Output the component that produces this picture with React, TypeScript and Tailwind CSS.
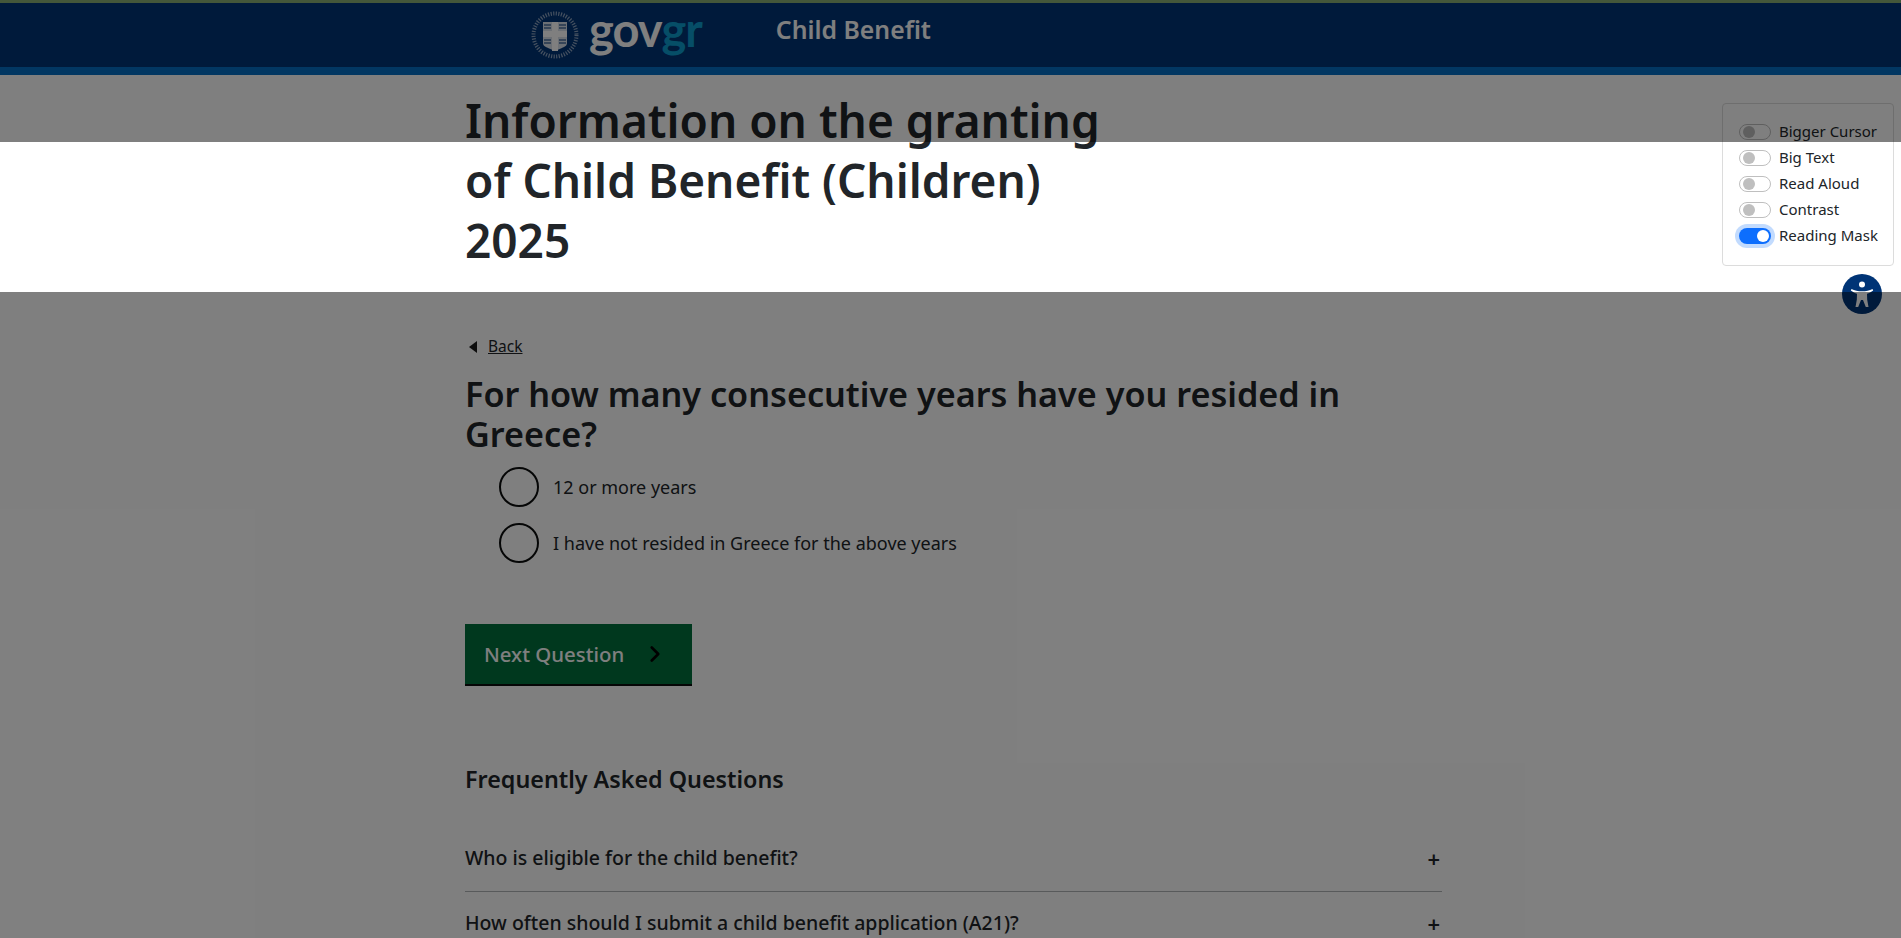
import { ChevronRight } from 'lucide-react';

const font = { fontFamily: '"Noto Sans", sans-serif' };

function Emblem() {
  return (
    <svg width="48" height="48" viewBox="0 0 48 48" className="shrink-0">
      <circle cx="24" cy="24" r="21.5" fill="none" stroke="#fff" strokeWidth="4" strokeDasharray="1.2 1.4" opacity="0.55" />
      <path d="M12 11h24v21c0 3-3 4-5 5l-7 3-7-3c-2-1-5-2-5-5z" fill="#fff" opacity="0.85" />
      <path d="M21 11h6v29h-6zM12 20h24v6H12z" fill="#fff" />
      <path d="M13 14h7M13 17h7M28 14h7M28 17h7M13 29h7M13 32h7M28 29h7M28 32h7" stroke="#003476" strokeWidth="1.1" />
    </svg>
  );
}

function Toggle({ label, on }: { label: string; on?: boolean }) {
  return (
    <div className="flex h-[26px] items-center gap-2">
      {on ? (
        <span className="flex h-4 w-8 items-center justify-end rounded-full bg-[#0d6efd] pr-[2px] shadow-[0_0_0_4px_rgba(13,110,253,0.25)]">
          <span className="h-3 w-3 rounded-full bg-white" />
        </span>
      ) : (
        <span className="flex h-4 w-8 items-center rounded-full border border-[#bfbfbf] bg-white pl-[3px]">
          <span className="h-3 w-3 rounded-full bg-[#bfbfbf]" />
        </span>
      )}
      <span className="text-[15px] text-[#212529]">{label}</span>
    </div>
  );
}

function Radio({ label }: { label: string }) {
  return (
    <div className="flex h-14 items-center gap-[14px] pl-[34px]">
      <span className="h-10 w-10 rounded-full border-2 border-[#0b0c0c] bg-white" />
      <span className="text-[18px] text-[#212529]">{label}</span>
    </div>
  );
}

function FaqRow({ label, border }: { label: string; border?: boolean }) {
  return (
    <div className={`flex items-center justify-between ${border ? 'h-[67px] border-b border-[#b1b4b6]' : 'h-[61px]'}`}>
      <span className="text-[19.5px] font-medium text-[#212529]">{label}</span>
      <span className="pr-[2px] text-[22px] font-semibold leading-none text-[#212529]">+</span>
    </div>
  );
}

export default function App() {
  return (
    <div className="relative h-[938px] w-full overflow-hidden bg-white" style={font}>
      <header className="border-t-[3px] border-b-8 border-t-[#88ae74] border-b-[#046ec5] bg-[#003476]">
        <div className="flex h-[64px] items-center pl-[531px]">
          <Emblem />
          <div className="mb-[12px] ml-[10px] flex text-[47px] font-bold leading-none tracking-[-1px]" style={{ fontFamily: 'Lato, sans-serif' }}>
            <span className="text-white">gov</span>
            <span className="text-[#0d9ccf]">gr</span>
          </div>
          <span className="mb-[10px] ml-[74px] text-[24.8px] font-semibold text-white">Child Benefit</span>
        </div>
      </header>

      <main className="ml-[465px] w-[977px] pt-[15px]">
        <h1 className="text-[46px] font-semibold leading-[60px] text-[#212529]">
          Information on the granting
          <br />
          of Child Benefit (Children)
          <br />
          2025
        </h1>

        <a className="mt-[65px] flex h-6 items-center gap-[10px] pl-[3px] text-[15.5px] text-[#212529] underline">
          <svg width="10" height="12" viewBox="0 0 10 12">
            <path d="M9 0v12L1 6z" fill="#1a1a1a" />
          </svg>
          Back
        </a>

        <h2 className="mt-[15px] text-[34.2px] font-semibold leading-[40px] text-[#212529]">
          For how many consecutive years have you resided in Greece?
        </h2>

        <div className="mt-[5px] flex flex-col">
          <Radio label="12 or more years" />
          <Radio label="I have not resided in Greece for the above years" />
        </div>

        <button className="mt-[53px] flex h-[62px] w-[227px] items-center gap-[18px] border-b-2 border-[#0b0c0c] bg-[#00703c] pl-[19px] text-[20.4px] font-medium text-white">
          Next Question
          <ChevronRight size={26} strokeWidth={2.5} color="#000" />
        </button>

        <h3 className="mt-[77px] text-[23.3px] font-semibold leading-8 text-[#212529]">Frequently Asked Questions</h3>

        <div className="mt-[30px]">
          <FaqRow label="Who is eligible for the child benefit?" border />
          <FaqRow label="How often should I submit a child benefit application (A21)?" />
        </div>
      </main>

      <aside className="absolute right-[7px] top-[103px] flex h-[163px] w-[172px] flex-col justify-center rounded border border-[#dcdcdc] bg-white pb-[2px] pl-4">
        <Toggle label="Bigger Cursor" />
        <Toggle label="Big Text" />
        <Toggle label="Read Aloud" />
        <Toggle label="Contrast" />
        <Toggle label="Reading Mask" on />
      </aside>

      <div className="absolute right-[19px] top-[274px] flex h-10 w-10 items-center justify-center rounded-full bg-[#003476]">
        <svg width="24" height="28" viewBox="0 0 24 28" fill="#fff">
          <circle cx="12" cy="4.500" r="3" />
          <path d="M1.500 9c3 1.600 6.500 2.300 10.500 2.300S19.500 10.600 22.500 9l.7 1.600c-2 1.600-4.200 2.600-6.200 3.100l.2 6 1.300 7.300h-2.700L13 20h-2l-2.800 7H5.500l1.300-7.300.2-6c-2-.5-4.200-1.500-6.200-3.100z" />
        </svg>
      </div>

      {/* reading mask */}
      <div className="pointer-events-none absolute inset-x-0 top-0 h-[142px] bg-black/50" />
      <div className="pointer-events-none absolute inset-x-0 bottom-0 top-[292px] bg-black/50" />
    </div>
  );
}
